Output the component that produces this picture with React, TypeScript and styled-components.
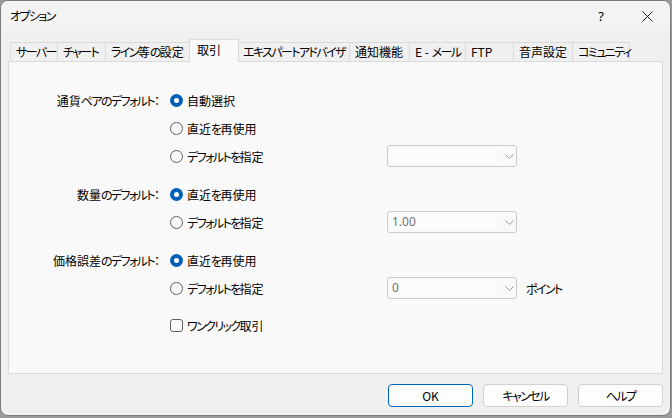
import React from "react";
import styled, { createGlobalStyle, css } from "styled-components";

const Global = createGlobalStyle`
  html, body { margin: 0; padding: 0; background: #9a9a9a; }
  body {
    font-family: "Noto Sans CJK JP", "Noto Sans", sans-serif;
    font-size: 12px;
    color: #000;
    font-feature-settings: "palt";
  }
  * { box-sizing: border-box; }
`;

const Kana = styled.span`
  letter-spacing: -1.6px;
`;

const JP: React.FC<{ t: string }> = ({ t }) => {
  const parts = t.split(/([\u3040-\u30ff]+)/).filter((p) => p.length > 0);
  return (
    <>
      {parts.map((p, i) =>
        /^[\u3040-\u30ff]+$/.test(p) ? <Kana key={i}>{p}</Kana> : <React.Fragment key={i}>{p}</React.Fragment>
      )}
    </>
  );
};

const Dialog = styled.div`
  width: 671px;
  height: 416px;
  border: 1px solid #7b7b7b;
  border-radius: 8px;
  background: #f0f0f0;
  overflow: hidden;
  display: flex;
  flex-direction: column;
`;

const TitleBar = styled.div`
  height: 30px;
  flex: none;
  display: flex;
  align-items: center;
  padding-left: 9px;
  background: #f3f3f3;
`;

const Title = styled.span`
  font-size: 12px;
  line-height: 14px;
`;

const TitleButtons = styled.div`
  margin-left: auto;
  display: flex;
  height: 100%;
`;

const TitleButton = styled.div`
  width: 46px;
  height: 100%;
  display: flex;
  align-items: center;
  justify-content: center;
  font-family: "Segoe UI", "Noto Sans", sans-serif;
  font-size: 13px;
`;

const Body = styled.div`
  flex: 1;
  display: flex;
  flex-direction: column;
  padding: 8px 0 0 7px;
`;

const TabStrip = styled.div`
  display: flex;
  align-items: flex-end;
  height: 23px;
  padding-left: 2px;
  margin-bottom: -1px;
  position: relative;
  z-index: 1;
`;

const Tab = styled.div<{ $w: number; $active?: boolean; $last?: boolean }>`
  flex: none;
  font-size: 12px;
  line-height: 14px;
  white-space: nowrap;
  border-top: 1px solid #dadada;
  border-left: 1px solid #dadada;
  ${(p) =>
    p.$last &&
    css`
      border-right: 1px solid #dadada;
    `}
  ${(p) =>
    p.$active
      ? css`
          width: ${p.$w + 4}px;
          height: 23px;
          margin: 0 -2px;
          padding: 3px 0 0 7px;
          background: #f9f9f9;
          border-right: 1px solid #dcdcdc;
          border-color: #dcdcdc;
          position: relative;
          z-index: 2;
        `
      : css`
          width: ${p.$w}px;
          height: 19px;
          margin-bottom: 1px;
          padding: 2px 0 0 5px;
          background: #f0f0f0;
        `}
`;

const Panel = styled.div`
  width: 655px;
  height: 313px;
  border: 1px solid #dadada;
  background: #f9f9f9;
  padding-top: 24px;
  display: flex;
  flex-direction: column;
`;

const Group = styled.div<{ $gap: number }>`
  margin-top: ${(p) => p.$gap}px;
  display: flex;
  flex-direction: column;
`;

const Row = styled.div`
  height: 28px;
  display: grid;
  grid-template-columns: 154px 224px 130px auto;
  align-items: center;
`;

const Label = styled.div`
  text-align: right;
  padding-right: 3px;
  font-size: 12px;
  white-space: nowrap;
`;

const Option = styled.label`
  display: flex;
  align-items: center;
  gap: 4px;
  font-size: 12px;
  white-space: nowrap;
  padding-left: 7px;
`;

const RadioMark = styled.span<{ $on?: boolean }>`
  width: 13px;
  height: 13px;
  border-radius: 50%;
  flex: none;
  position: relative;
  ${(p) =>
    p.$on
      ? css`
          background: #005fb8;
          &::after {
            content: "";
            position: absolute;
            left: 4px;
            top: 4px;
            width: 5px;
            height: 5px;
            border-radius: 50%;
            background: #fff;
          }
        `
      : css`
          border: 1px solid #606060;
          background: #f7f7f7;
        `}
`;

const CheckMark = styled.span`
  width: 13px;
  height: 13px;
  border: 1px solid #606060;
  border-radius: 3px;
  background: #fbfbfb;
  flex: none;
`;

const Combo = styled.div`
  width: 130px;
  height: 22px;
  border: 1px solid #cbcbcb;
  border-radius: 3px;
  background: #f9f9f9;
  display: flex;
  align-items: center;
  padding: 2px;
`;

const ComboValue = styled.div`
  width: 108px;
  height: 100%;
  background: #fcfcfc;
  color: #707070;
  font-size: 12px;
  line-height: 16px;
  padding-left: 2px;
  font-family: "Segoe UI", "Noto Sans", sans-serif;
`;

const Chevron = styled.svg`
  margin-left: 8px;
`;

const Suffix = styled.div`
  padding-left: 9px;
  font-size: 12px;
  white-space: nowrap;
`;

const Footer = styled.div`
  display: flex;
  justify-content: flex-end;
  gap: 10px;
  padding: 10px 7px 0 0;
`;

const Button = styled.div<{ $primary?: boolean }>`
  width: 85px;
  height: 23px;
  border: 1px solid ${(p) => (p.$primary ? "#0067c0" : "#d0d0d0")};
  border-radius: 4px;
  background: #fdfdfd;
  display: flex;
  align-items: center;
  justify-content: center;
  font-size: 12px;
`;

const ComboBox: React.FC<{ value?: string }> = ({ value }) => (
  <Combo>
    <ComboValue>{value}</ComboValue>
    <Chevron width="9" height="5" viewBox="0 0 9 5">
      <path d="M0.5 0.5 L4.5 4.5 L8.5 0.5" fill="none" stroke="#9a9a9a" strokeWidth="1" />
    </Chevron>
  </Combo>
);

const Radio: React.FC<{ on?: boolean; text: string }> = ({ on, text }) => (
  <Option>
    <RadioMark $on={on} />
    <span>
      <JP t={text} />
    </span>
  </Option>
);

const tabs: [string, number][] = [
  ["サーバー", 47],
  ["チャート", 48],
  ["ライン等の設定", 86],
  ["取引", 46],
  ["エキスパートアドバイザ", 112],
  ["通知機能", 60],
  ["E - メール", 56],
  ["FTP", 48],
  ["音声設定", 59],
  ["コミュニティ", 58],
];

export default function App() {
  return (
    <>
      <Global />
      <Dialog>
        <TitleBar>
          <Title>
            <JP t="オプション" />
          </Title>
          <TitleButtons>
            <TitleButton>?</TitleButton>
            <TitleButton>
              <svg width="11" height="11" viewBox="0 0 11 11">
                <path d="M0.5 0.5 L10.5 10.5 M10.5 0.5 L0.5 10.5" stroke="#1a1a1a" strokeWidth="1" />
              </svg>
            </TitleButton>
          </TitleButtons>
        </TitleBar>
        <Body>
          <TabStrip>
            {tabs.map(([t, w], i) => (
              <Tab key={t} $w={w} $active={t === "取引"} $last={i === tabs.length - 1}>
                <JP t={t} />
              </Tab>
            ))}
          </TabStrip>
          <Panel>
            <Group $gap={0}>
              <Row>
                <Label>
                  <JP t="通貨ペアのデフォルト：" />
                </Label>
                <Radio on text="自動選択" />
              </Row>
              <Row>
                <span />
                <Radio text="直近を再使用" />
              </Row>
              <Row>
                <span />
                <Radio text="デフォルトを指定" />
                <ComboBox />
              </Row>
            </Group>
            <Group $gap={10}>
              <Row>
                <Label>
                  <JP t="数量のデフォルト：" />
                </Label>
                <Radio on text="直近を再使用" />
              </Row>
              <Row>
                <span />
                <Radio text="デフォルトを指定" />
                <ComboBox value="1.00" />
              </Row>
            </Group>
            <Group $gap={10}>
              <Row>
                <Label>
                  <JP t="価格誤差のデフォルト：" />
                </Label>
                <Radio on text="直近を再使用" />
              </Row>
              <Row>
                <span />
                <Radio text="デフォルトを指定" />
                <ComboBox value="0" />
                <Suffix>
                  <JP t="ポイント" />
                </Suffix>
              </Row>
            </Group>
            <Group $gap={9}>
              <Row>
                <span />
                <Option>
                  <CheckMark />
                  <span>
                    <JP t="ワンクリック取引" />
                  </span>
                </Option>
              </Row>
            </Group>
          </Panel>
          <Footer>
            <Button $primary>OK</Button>
            <Button>
              <JP t="キャンセル" />
            </Button>
            <Button>
              <JP t="ヘルプ" />
            </Button>
          </Footer>
        </Body>
      </Dialog>
    </>
  );
}
